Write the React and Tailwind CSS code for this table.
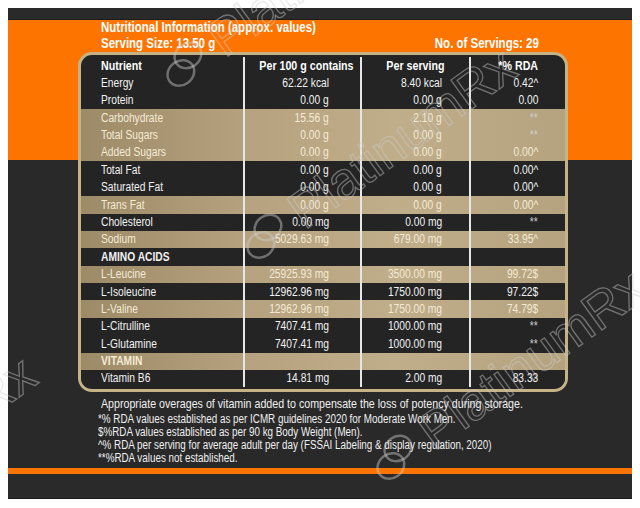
import React from 'react';

const rows = [
  { n: 'Energy', a: '62.22 kcal', b: '8.40 kcal', c: '0.42^' },
  { n: 'Protein', a: '0.00 g', b: '0.00 g', c: '0.00' },
  { n: 'Carbohydrate', a: '15.56 g', b: '2.10 g', c: '**', tan: true },
  { n: 'Total Sugars', a: '0.00 g', b: '0.00 g', c: '**', tan: true },
  { n: 'Added Sugars', a: '0.00 g', b: '0.00 g', c: '0.00^', tan: true },
  { n: 'Total Fat', a: '0.00 g', b: '0.00 g', c: '0.00^' },
  { n: 'Saturated Fat', a: '0.00 g', b: '0.00 g', c: '0.00^' },
  { n: 'Trans Fat', a: '0.00 g', b: '0.00 g', c: '0.00^', tan: true },
  { n: 'Cholesterol', a: '0.00 mg', b: '0.00 mg', c: '**' },
  { n: 'Sodium', a: '5029.63 mg', b: '679.00 mg', c: '33.95^', tan: true },
  { n: 'AMINO ACIDS', a: '', b: '', c: '', head: true },
  { n: 'L-Leucine', a: '25925.93 mg', b: '3500.00 mg', c: '99.72$', tan: true },
  { n: 'L-Isoleucine', a: '12962.96 mg', b: '1750.00 mg', c: '97.22$' },
  { n: 'L-Valine', a: '12962.96 mg', b: '1750.00 mg', c: '74.79$', tan: true },
  { n: 'L-Citrulline', a: '7407.41 mg', b: '1000.00 mg', c: '**' },
  { n: 'L-Glutamine', a: '7407.41 mg', b: '1000.00 mg', c: '**' },
  { n: 'VITAMIN', a: '', b: '', c: '', head: true, tan: true },
  { n: 'Vitamin B6', a: '14.81 mg', b: '2.00 mg', c: '83.33' },
];

// narrow text: Liberation Sans squeezed to the width of a condensed face
function T({ children, o = 'left', className = '' }) {
  const origin = o === 'left' ? 'origin-left' : o === 'right' ? 'origin-right' : 'origin-center';
  return <span className={`inline-block whitespace-nowrap scale-x-[0.82] ${origin} ${className}`}>{children}</span>;
}

function Row({ r }) {
  const bg = r.tan
    ? 'bg-[linear-gradient(90deg,#9d8a67_0%,#b6a27e_35%,#c0ad89_65%,#b5a27e_100%)] text-[#f4ebd7]'
    : 'bg-[#242424] text-[#f2f2f2]';
  return (
    <div className={`flex h-[17.4px] items-center leading-none ${bg}`}>
      <div className={`w-[162px] pl-[20px] ${r.head ? 'font-bold' : ''}`}>
        <T>{r.n}</T>
      </div>
      <div className="w-[117px] h-full flex items-center justify-end pr-[31px] border-l-2 border-[#e6e6e6]">
        <T o="right">{r.a}</T>
      </div>
      <div className="w-[109px] h-full flex items-center justify-end pr-[27px] border-l-2 border-[#e6e6e6]">
        <T o="right">{r.b}</T>
      </div>
      <div className="w-[96px] h-full flex items-center justify-end pr-[27px] border-l-2 border-[#e6e6e6]">
        <T o="right" className={r.c === '**' ? 'text-[#cfcfcf]' : ''}>{r.c}</T>
      </div>
    </div>
  );
}

function Watermark({ className }) {
  return (
    <div className={`absolute flex items-center gap-[6px] origin-[30px_30px] -rotate-[36deg] pointer-events-none ${className}`}>
      <svg width="60" height="60" viewBox="0 0 60 60" fill="none" stroke="rgba(205,205,205,0.45)" strokeWidth="2.5">
        <ellipse cx="22" cy="34" rx="14" ry="12" />
        <ellipse cx="38" cy="24" rx="14" ry="12" />
      </svg>
      <span className="text-[52px] leading-none text-transparent font-['Liberation_Sans',sans-serif] [-webkit-text-stroke:1.3px_rgba(205,205,205,0.45)]">
        PlatinumRx
      </span>
    </div>
  );
}

export default function App() {
  return (
    <div className="relative w-[640px] h-[508px] bg-white overflow-hidden font-['Liberation_Sans',sans-serif]">
      <div className="ml-[8px] mt-[8px] w-[624px] h-[491px] bg-[#292929] flex flex-col">
        <div className="h-[12px] bg-[#2a2a2a] border-b border-[#1c1c1c]" />
        <div className="flex-1 flex flex-col bg-[linear-gradient(to_bottom,#fe7401_0,#fe7401_140px,#292929_140px)]">
          <div className="pl-[93px] pr-[93px] text-white font-bold text-[14px]">
            <div className="h-[15px] leading-[15px]">
              <T>Nutritional Information (approx. values)</T>
            </div>
            <div className="h-[17px] leading-[17px] flex justify-between">
              <T>Serving Size: 13.50 g</T>
              <T o="right">No. of Servings: 29</T>
            </div>
          </div>
          <div className="ml-[70px] w-[490px] rounded-[14px] border-[3px] border-[#c6b287] bg-[#242424] py-[2px] text-[12.5px] overflow-hidden">
            <div className="flex h-[17.4px] items-center leading-none text-white font-bold text-[13px]">
              <div className="w-[162px] pl-[20px]">
                <T>Nutrient</T>
              </div>
              <div className="w-[117px] h-full flex items-center justify-center pl-[8px] border-l-2 border-[#e6e6e6]">
                <T o="center">Per 100 g contains</T>
              </div>
              <div className="w-[109px] h-full flex items-center justify-center border-l-2 border-[#e6e6e6]">
                <T o="center">Per serving</T>
              </div>
              <div className="w-[96px] h-full flex items-center justify-center border-l-2 border-[#e6e6e6]">
                <T o="center">*% RDA</T>
              </div>
            </div>
            {rows.map((r) => (
              <Row key={r.n} r={r} />
            ))}
          </div>
          <div className="pl-[90px] pt-[3px] text-[#f0f0f0] text-[12px]">
            <div className="h-[18px] leading-[18px] pl-[3px] text-[13px]">
              <T>Appropriate overages of vitamin added to compensate the loss of potency during storage.</T>
            </div>
            <div className="h-[13px] leading-[13px]">
              <T>*% RDA values established as per ICMR guidelines 2020 for Moderate Work Men.</T>
            </div>
            <div className="h-[13px] leading-[13px]">
              <T>$%RDA values established as per 90 kg Body Weight (Men).</T>
            </div>
            <div className="h-[13px] leading-[13px]">
              <T>^% RDA per serving for average adult per day (FSSAI Labeling &amp; display regulation, 2020)</T>
            </div>
            <div className="h-[13px] leading-[13px]">
              <T>**%RDA values not established.</T>
            </div>
          </div>
          <div className="mt-[3px] h-[6px] bg-[#fe7401]" />
          <div className="flex-1 bg-[#2a2a2a] border-b border-[#1a1a1a]" />
        </div>
      </div>
      <Watermark className="left-[155px] top-[35px]" />
      <Watermark className="left-[235px] top-[207px]" />
      <Watermark className="left-[365px] top-[428px]" />
      <Watermark className="left-[-245px] top-[515px]" />
    </div>
  );
}
